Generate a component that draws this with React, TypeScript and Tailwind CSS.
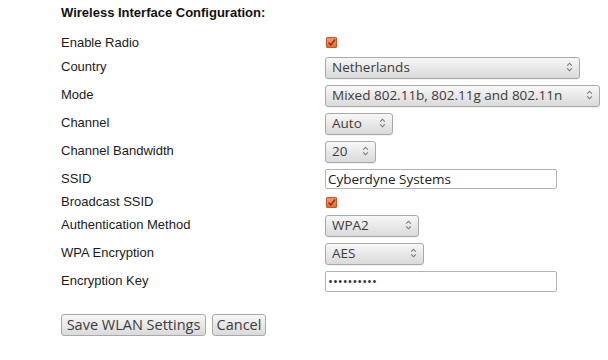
import React, { useState } from "react";

const ui = { fontFamily: "'Open Sans', 'Noto Sans', sans-serif" };

function Arrows() {
  return (
    <svg
      width="7"
      height="12"
      viewBox="0 0 7 12"
      className="pointer-events-none absolute right-[7px] top-1/2 -translate-y-1/2"
    >
      <path d="M1.2 4.6 L3.5 2.2 L5.8 4.6" fill="none" stroke="#777" strokeWidth="1.1" />
      <path d="M1.2 7.4 L3.5 9.8 L5.8 7.4" fill="none" stroke="#777" strokeWidth="1.1" />
    </svg>
  );
}

function Select({ value, options, width }: { value: string; options: string[]; width: string }) {
  const [v, setV] = useState(value);
  return (
    <div className={`relative ${width}`}>
      <select
        value={v}
        onChange={(e) => setV(e.target.value)}
        style={ui}
        className="h-[22px] w-full appearance-none rounded-[3px] border border-[#a9a9a9]
          bg-gradient-to-b from-[#f7f7f7] to-[#dadada] pl-[6px] pr-5 text-[13.5px] leading-none
          text-[#3c3c3c] shadow-[0_1px_0_rgba(0,0,0,0.05)] outline-none"
      >
        {options.map((o) => (
          <option key={o}>{o}</option>
        ))}
      </select>
      <Arrows />
    </div>
  );
}

function Check() {
  const [on, setOn] = useState(true);
  return (
    <button
      onClick={() => setOn(!on)}
      className="ml-[1px] flex h-[11px] w-[11px] items-center justify-center rounded-[1px]
        border border-[#c9562b] bg-gradient-to-b from-[#f2946a] to-[#e06c3c]"
    >
      {on && (
        <svg width="9" height="9" viewBox="0 0 9 9">
          <path d="M1.5 4.5 L3.8 7 L8 1.5" fill="none" stroke="#8a2f12" strokeWidth="1.4" />
        </svg>
      )}
    </button>
  );
}

function Row({ label, h, children }: { label: string; h: string; children: React.ReactNode }) {
  return (
    <div className={`flex items-center ${h}`}>
      <div className="w-[264px] text-[13px] text-[#1b1b1b]">{label}</div>
      <div className="flex items-center">{children}</div>
    </div>
  );
}

export default function App() {
  const [ssid, setSsid] = useState("Cyberdyne Systems");
  const [key, setKey] = useState("cyberdyne1");

  return (
    <div
      className="h-[360px] w-[608px] bg-white pl-[61px] pt-[5px]"
      style={{ fontFamily: "'Liberation Sans', Arial, sans-serif" }}
    >
      <h1 className="h-[16px] text-[13px] font-bold leading-[16px] text-[#111]">
        Wireless Interface Configuration:
      </h1>

      <div className="mt-[11px]">
        <Row label="Enable Radio" h="h-[21px]">
          <Check />
        </Row>
        <Row label="Country" h="h-[28px]">
          <Select value="Netherlands" options={["Netherlands", "Germany", "Belgium"]} width="w-[255px]" />
        </Row>
        <Row label="Mode" h="h-[28px]">
          <Select
            value="Mixed 802.11b, 802.11g and 802.11n"
            options={["Mixed 802.11b, 802.11g and 802.11n", "802.11g only", "802.11n only"]}
            width="w-[275px]"
          />
        </Row>
        <Row label="Channel" h="h-[28px]">
          <Select value="Auto" options={["Auto", "1", "6", "11"]} width="w-[68px]" />
        </Row>
        <Row label="Channel Bandwidth" h="h-[28px]">
          <Select value="20" options={["20", "40"]} width="w-[51px]" />
        </Row>
        <Row label="SSID" h="h-[28px]">
          <input
            value={ssid}
            onChange={(e) => setSsid(e.target.value)}
            style={ui}
            className="h-[20px] w-[232px] rounded-[2px] border border-[#b3b3b3] bg-white px-[2px]
              text-[13.5px] leading-none text-[#222] outline-none"
          />
        </Row>
        <Row label="Broadcast SSID" h="h-[18px]">
          <Check />
        </Row>
        <Row label="Authentication Method" h="h-[28px]">
          <Select value="WPA2" options={["WPA2", "WPA", "None"]} width="w-[94px]" />
        </Row>
        <Row label="WPA Encryption" h="h-[28px]">
          <Select value="AES" options={["AES", "TKIP"]} width="w-[99px]" />
        </Row>
        <Row label="Encryption Key" h="h-[28px]">
          <input
            type="password"
            value={key}
            onChange={(e) => setKey(e.target.value)}
            style={ui}
            className="h-[21px] w-[232px] rounded-[2px] border border-[#b3b3b3] bg-white px-[2px]
              text-[13px] text-[#333] outline-none"
          />
        </Row>
      </div>

      <div className="mt-[19px] flex gap-[6px]" style={ui}>
        <button className="h-[22px] w-[145px] rounded-[3px] border border-[#a9a9a9] bg-gradient-to-b from-[#f7f7f7] to-[#dadada] text-[14.5px] leading-none text-[#3c3c3c]">
          Save WLAN Settings
        </button>
        <button className="h-[22px] w-[54px] rounded-[3px] border border-[#a9a9a9] bg-gradient-to-b from-[#f7f7f7] to-[#dadada] text-[14.5px] leading-none text-[#3c3c3c]">
          Cancel
        </button>
      </div>
    </div>
  );
}
